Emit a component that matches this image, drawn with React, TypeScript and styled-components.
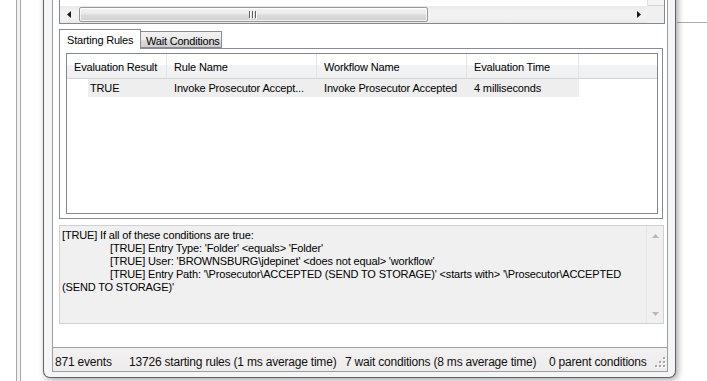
import React from 'react'
import styled, { createGlobalStyle } from 'styled-components'

const GlobalStyle = createGlobalStyle`
  html, body {
    margin: 0;
    padding: 0;
    background: #ffffff;
  }
  body {
    font-family: 'Liberation Sans', Arial, sans-serif;
    font-size: 11px;
    color: #000000;
  }
  * {
    box-sizing: border-box;
  }
`

const Desktop = styled.div`
  position: relative;
  width: 707px;
  height: 381px;
  overflow: hidden;
  background: #ffffff;
`

// edges of the windows lying behind the dialog
const BackEdge = styled.div`
  position: absolute;
  left: 16px;
  top: 0;
  bottom: 0;
  width: 5px;
  border-left: 1px solid #a7a7a7;
  border-right: 1px solid #a7a7a7;
  background: #f3f3f3;
`

const BackRule = styled.div`
  position: absolute;
  left: 677px;
  right: 0;
  top: 22px;
  height: 1px;
  background: #a9a9a9;
`

const Window = styled.div`
  position: absolute;
  left: 43px;
  top: -20px;
  width: 633px;
  height: 398px;
  display: flex;
  padding: 0 7px 5px 8px;
  border: 1px solid #5f6163;
  border-top: none;
  border-radius: 0 0 7px 7px;
  background: #f4f5f7;
  box-shadow: 2px 2px 6px rgba(0, 0, 0, 0.35);
`

const Client = styled.div`
  flex: 1;
  display: flex;
  flex-direction: column;
  border: 1px solid #9b9da1;
  border-top: none;
  background: #ffffff;
`

const UpperList = styled.div`
  height: 44px;
  margin: 0 2px 0 6px;
  display: flex;
  border: 1px solid #828790;
  border-top: none;
  background: #ffffff;
`

const ListBody = styled.div`
  flex: 1;
  display: flex;
  flex-direction: column;
`

const ListContent = styled.div`
  flex: 1;
  background: #ffffff;
`

const HScroll = styled.div`
  height: 17px;
  display: flex;
  align-items: stretch;
  background: linear-gradient(#e9e9e9, #f2f2f2 30%, #f2f2f2 70%, #e9e9e9);
`

const ScrollButton = styled.div`
  width: 17px;
  display: flex;
  align-items: center;
  justify-content: center;
`

const Track = styled.div`
  flex: 1;
  display: flex;
  align-items: stretch;
  padding: 1px 0 1px 2px;
`

const Thumb = styled.div`
  width: 349px;
  display: flex;
  align-items: center;
  justify-content: center;
  border: 1px solid #979797;
  border-radius: 2px;
  background: linear-gradient(#f4f4f4, #e9e9e9 45%, #dadada 55%, #d2d2d2);
  box-shadow: inset 0 0 0 1px rgba(255, 255, 255, 0.7);
`

const VScrollColumn = styled.div`
  width: 17px;
  display: flex;
  flex-direction: column;
  background: #f0f0f0;
`

const VScrollTrack = styled.div`
  flex: 1;
  border-left: 1px solid #e2e2e2;
  border-bottom: 1px solid #d5d5d5;
  background: #f4f4f4;
`

const Corner = styled.div`
  height: 17px;
  background: #f0f0f0;
`

const Tabs = styled.div`
  margin: 5px 4px 0 6px;
  display: flex;
  flex-direction: column;
`

const TabStrip = styled.div`
  height: 19px;
  display: flex;
  align-items: flex-end;
`

const Tab = styled.div<{ active?: boolean }>`
  position: relative;
  z-index: ${(p) => (p.active ? 1 : 0)};
  width: 82px;
  height: ${(p) => (p.active ? '20px' : '17px')};
  margin-bottom: ${(p) => (p.active ? '-1px' : '0')};
  margin-left: ${(p) => (p.active ? '0' : '-1px')};
  padding: ${(p) => (p.active ? '4px 0 0 7px' : '3px 0 0 5px')};
  border: 1px solid #898c95;
  border-bottom: ${(p) => (p.active ? 'none' : '1px solid #898c95')};
  background: ${(p) =>
    p.active ? '#ffffff' : 'linear-gradient(#f2f2f2, #ebebeb 50%, #dddddd 51%, #cfcfcf)'};
  white-space: nowrap;
  letter-spacing: -0.2px;
`

const TabPanel = styled.div`
  height: 171px;
  display: flex;
  padding: 4px 4px 4px 6px;
  border: 1px solid #898c95;
  background: #ffffff;
`

const ListView = styled.div`
  flex: 1;
  display: flex;
  flex-direction: column;
  border: 1px solid #828790;
  background: #ffffff;
`

const HeaderRow = styled.div`
  height: 25px;
  display: flex;
  border-bottom: 1px solid #d5d5d5;
  background: linear-gradient(#ffffff, #ffffff 45%, #f3f4f6 46%, #eff0f2);
`

const HeaderCell = styled.div<{ w: number }>`
  width: ${(p) => p.w}px;
  display: flex;
  align-items: center;
  padding: 2px 0 0 7px;
  border-right: 1px solid #e3e4e6;
  white-space: nowrap;
  letter-spacing: -0.15px;
`

const HeaderFiller = styled.div`
  flex: 1;
`

const Row = styled.div`
  height: 18px;
  display: flex;
`

const RowIndent = styled.div`
  width: 21px;
`

const RowSelection = styled.div`
  display: flex;
  background: #eeeeee;
`

const Cell = styled.div<{ w: number; pad?: number }>`
  width: ${(p) => p.w}px;
  display: flex;
  align-items: center;
  padding-left: ${(p) => (p.pad === undefined ? 7 : p.pad)}px;
  white-space: nowrap;
  overflow: hidden;
  letter-spacing: -0.15px;
`

const DetailPanel = styled.div`
  height: 99px;
  margin: 6px 3px 0 6px;
  display: flex;
  border: 1px solid #cfd1d4;
  background: #f0f0f0;
`

const DetailText = styled.div`
  flex: 1;
  padding: 3px 0 0 2px;
  line-height: 13px;
  letter-spacing: -0.15px;
`

const Line = styled.div<{ indent?: boolean }>`
  padding-left: ${(p) => (p.indent ? '48px' : '0')};
  white-space: pre;
`

const DetailScroll = styled.div`
  width: 17px;
  display: flex;
  flex-direction: column;
  justify-content: space-between;
  align-items: center;
  padding: 8px 0 7px;
  border-left: 1px solid #e6e6e6;
  background: #f0f0f0;
`

const Spacer = styled.div`
  flex: 1;
`

const StatusBar = styled.div`
  height: 24px;
  display: flex;
  align-items: center;
  padding: 5px 0 0 2px;
  border-top: 1px solid #a0a0a0;
  background: linear-gradient(#f2f0f0, #eeecec);
  font-size: 12px;
  letter-spacing: -0.2px;
  color: #101010;
`

const StatusLabel = styled.div<{ w?: number }>`
  width: ${(p) => (p.w ? `${p.w}px` : 'auto')};
  white-space: nowrap;
`

const SizeGrip = styled.div`
  margin-left: auto;
  margin-right: 1px;
  align-self: flex-end;
  margin-bottom: 3px;
  display: flex;
`

const Arrow = ({ dir, color }: { dir: 'left' | 'right' | 'up' | 'down'; color: string }) => {
  const pts = {
    left: '4,0 4,7 0,3.5',
    right: '0,0 0,7 4,3.5',
    up: '0,4 7,4 3.5,0',
    down: '0,0 7,0 3.5,4',
  }[dir]
  const vertical = dir === 'up' || dir === 'down'
  return (
    <svg width={vertical ? 7 : 4} height={vertical ? 4 : 7} viewBox={vertical ? '0 0 7 4' : '0 0 4 7'}>
      <polygon points={pts} fill={color} />
    </svg>
  )
}

const ThumbGrip = () => (
  <svg width='9' height='8' viewBox='0 0 9 8'>
    {[0, 3, 6].map((x) => (
      <g key={x}>
        <rect x={x} y={0} width={1} height={7} fill='#606060' />
        <rect x={x + 1} y={1} width={1} height={7} fill='#ffffff' />
      </g>
    ))}
  </svg>
)

const GripDots = () => (
  <svg width='11' height='11' viewBox='0 0 11 11'>
    {[
      [8, 0],
      [8, 4],
      [4, 4],
      [8, 8],
      [4, 8],
      [0, 8],
    ].map(([x, y]) => (
      <g key={`${x}-${y}`}>
        <rect x={x + 1} y={y + 1} width={2} height={2} fill='#ffffff' />
        <rect x={x} y={y} width={2} height={2} fill='#a8a8a8' />
      </g>
    ))}
  </svg>
)

const columns = [
  { title: 'Evaluation Result', w: 100 },
  { title: 'Rule Name', w: 150 },
  { title: 'Workflow Name', w: 150 },
  { title: 'Evaluation Time', w: 112 },
]

const App = () => {
  return (
    <Desktop>
      <GlobalStyle />
      <BackEdge />
      <BackRule />
      <Window>
        <Client>
          <UpperList>
            <ListBody>
              <ListContent />
              <HScroll>
                <ScrollButton>
                  <Arrow dir='left' color='#1a1a1a' />
                </ScrollButton>
                <Track>
                  <Thumb>
                    <ThumbGrip />
                  </Thumb>
                </Track>
                <ScrollButton>
                  <Arrow dir='right' color='#1a1a1a' />
                </ScrollButton>
              </HScroll>
            </ListBody>
            <VScrollColumn>
              <VScrollTrack />
              <Corner />
            </VScrollColumn>
          </UpperList>

          <Tabs>
            <TabStrip>
              <Tab active>Starting Rules</Tab>
              <Tab>Wait Conditions</Tab>
            </TabStrip>
            <TabPanel>
              <ListView>
                <HeaderRow>
                  {columns.map((c) => (
                    <HeaderCell key={c.title} w={c.w}>
                      {c.title}
                    </HeaderCell>
                  ))}
                  <HeaderFiller />
                </HeaderRow>
                <Row>
                  <RowIndent />
                  <RowSelection>
                    <Cell w={79} pad={2}>
                      TRUE
                    </Cell>
                    <Cell w={150}>Invoke Prosecutor Accept...</Cell>
                    <Cell w={150}>Invoke Prosecutor Accepted</Cell>
                    <Cell w={112}>4 milliseconds</Cell>
                  </RowSelection>
                </Row>
              </ListView>
            </TabPanel>
          </Tabs>

          <DetailPanel>
            <DetailText>
              <Line>[TRUE] If all of these conditions are true:</Line>
              <Line indent>[TRUE] Entry Type: 'Folder' &lt;equals&gt; 'Folder'</Line>
              <Line indent>[TRUE] User: 'BROWNSBURG\jdepinet' &lt;does not equal&gt; 'workflow'</Line>
              <Line indent>
                [TRUE] Entry Path: '\Prosecutor\ACCEPTED (SEND TO STORAGE)' &lt;starts with&gt; '\Prosecutor\ACCEPTED
              </Line>
              <Line>(SEND TO STORAGE)'</Line>
            </DetailText>
            <DetailScroll>
              <Arrow dir='up' color='#b9b9b9' />
              <Arrow dir='down' color='#b9b9b9' />
            </DetailScroll>
          </DetailPanel>

          <Spacer />

          <StatusBar>
            <StatusLabel w={74}>871 events</StatusLabel>
            <StatusLabel w={216}>13726 starting rules (1 ms average time)</StatusLabel>
            <StatusLabel w={204}>7 wait conditions (8 ms average time)</StatusLabel>
            <StatusLabel>0 parent conditions</StatusLabel>
            <SizeGrip>
              <GripDots />
            </SizeGrip>
          </StatusBar>
        </Client>
      </Window>
    </Desktop>
  )
}

export default App
